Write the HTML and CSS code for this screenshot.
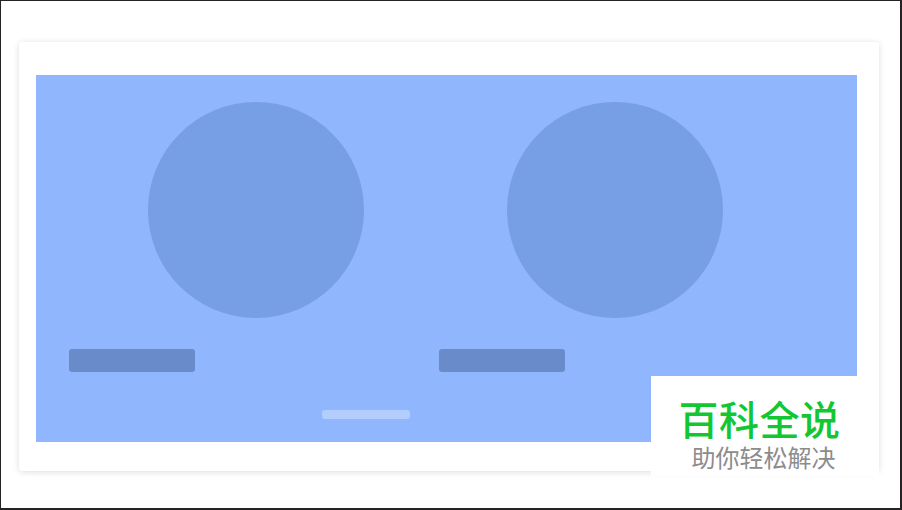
FILE: index.html
```html
<!DOCTYPE html>
<html>
<head>
<meta charset="utf-8">
<link rel="stylesheet" href="styles.css">
</head>
<body>
<div class="frame">
  <div class="card">
    <div class="canvas">
      <div class="circles">
        <div class="circle"></div>
        <div class="circle"></div>
      </div>
      <div class="bars">
        <div class="bar"></div>
        <div class="bar"></div>
      </div>
      <div class="handle"></div>
    </div>
  </div>
  <div class="watermark">
    <div class="wm-title">百科全说</div>
    <div class="wm-sub">助你轻松解决</div>
  </div>
</div>
</body>
</html>
```
FILE: styles.css
```css
* { box-sizing: border-box; }
html, body { margin: 0; padding: 0; background: #fff; }
.frame {
  position: relative;
  width: 902px;
  height: 510px;
  border-style: solid;
  border-color: #262324;
  border-width: 1px 2px 2px 1px;
  padding: 41px 0 0 18px;
  background: #fff;
  overflow: hidden;
}
.card {
  width: 860px;
  height: 429px;
  background: #fff;
  border-radius: 3px;
  box-shadow: 0 1px 6px rgba(0,0,0,0.14);
  padding: 33px 0 0 17px;
}
.canvas {
  width: 821px;
  height: 367px;
  background: #90b7fe;
  padding-top: 27px;
}
.circles {
  display: flex;
  gap: 143px;
  padding-left: 112px;
}
.circle {
  width: 216px;
  height: 216px;
  border-radius: 50%;
  background: #779fe6;
}
.bars {
  display: flex;
  gap: 244px;
  padding-left: 33px;
  margin-top: 31px;
}
.bar {
  width: 126px;
  height: 23px;
  border-radius: 3px;
  background: #6a8bca;
}
.handle {
  width: 88px;
  height: 9px;
  border-radius: 3px;
  background: #b3cdff;
  margin: 38px 0 0 286px;
}
.watermark {
  position: absolute;
  left: 650px;
  top: 375px;
  width: 228px;
  height: 100px;
  background: #fff;
  display: flex;
  flex-direction: column;
  align-items: center;
  font-family: "Noto Sans CJK SC", sans-serif;
}
.wm-title {
  font-size: 40px;
  line-height: 40px;
  margin-top: 22px;
  margin-right: 11px;
  color: #13c733;
  font-weight: 500;
  letter-spacing: 0.5px;
}
.wm-sub {
  font-size: 24px;
  line-height: 26px;
  margin-top: 6px;
  margin-right: 3px;
  color: #8c8c8c;
}
```
